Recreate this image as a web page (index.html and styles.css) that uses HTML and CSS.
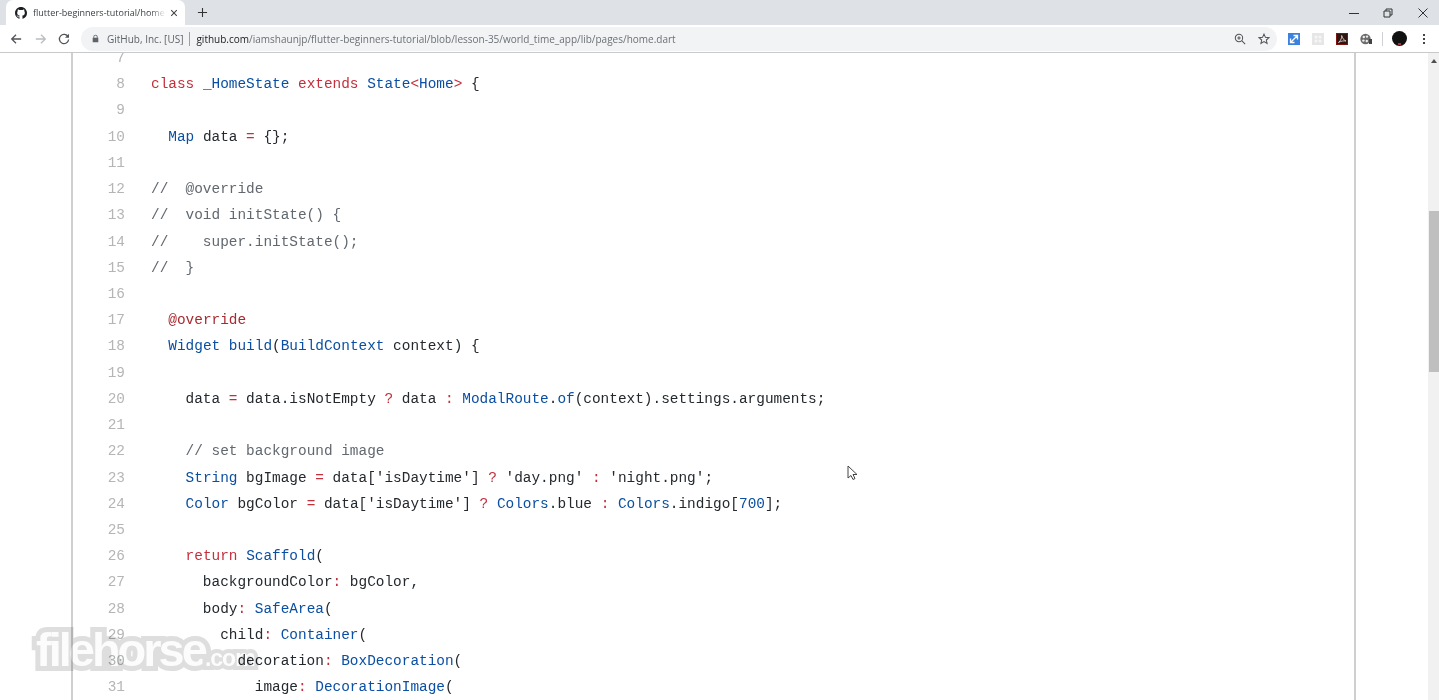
FILE: index.html
```html
<!DOCTYPE html>
<html lang="en">
<head>
    <meta charset="UTF-8">
    <title>flutter-beginners-tutorial/home.dart</title>
    <link rel="stylesheet" href="styles.css">
</head>
<body>
    <!-- Browser chrome -->
    <header class="chrome">
        <div class="tabstrip">
            <div class="tab">
                <svg class="favicon" viewBox="0 0 16 16"><path fill="#1b1f23" d="M8 0C3.58 0 0 3.58 0 8c0 3.54 2.29 6.53 5.47 7.59.4.07.55-.17.55-.38 0-.19-.01-.82-.01-1.49-2.01.37-2.53-.49-2.69-.94-.09-.23-.48-.94-.82-1.13-.28-.15-.68-.52-.01-.53.63-.01 1.08.58 1.23.82.72 1.21 1.87.87 2.33.66.07-.52.28-.87.51-1.07-1.78-.2-3.64-.89-3.64-3.95 0-.87.31-1.59.82-2.15-.08-.2-.36-1.02.08-2.12 0 0 .67-.21 2.2.82.64-.18 1.32-.27 2-.27s1.36.09 2 .27c1.53-1.04 2.2-.82 2.2-.82.44 1.1.16 1.92.08 2.12.51.56.82 1.27.82 2.15 0 3.07-1.87 3.75-3.65 3.95.29.25.54.73.54 1.48 0 1.07-.01 1.93-.01 2.2 0 .21.15.46.55.38A8.01 8.01 0 0 0 16 8c0-4.42-3.58-8-8-8z"/></svg>
                <span class="tab-title">flutter-beginners-tutorial/home.dart</span>
                <svg class="tab-close" viewBox="0 0 10 10"><path d="M1.5 1.5l7 7M8.5 1.5l-7 7"/></svg>
            </div>
            <svg class="new-tab" viewBox="0 0 12 12"><path d="M6 1v10M1 6h10"/></svg>
            <div class="window-controls">
                <svg viewBox="0 0 10 10"><path d="M0 5.5h10"/></svg>
                <svg viewBox="0 0 10 10"><path d="M1 3h6v6H1zM3 3V1h6v6H7"/></svg>
                <svg viewBox="0 0 10 10"><path d="M.5.5l9 9M9.5.5l-9 9"/></svg>
            </div>
        </div>
        <div class="toolbar">
            <svg class="nav-icon" viewBox="0 0 14 14"><path d="M13 7H2M7 2L2 7l5 5"/></svg>
            <svg class="nav-icon disabled" viewBox="0 0 14 14"><path d="M1 7h11M7 2l5 5-5 5"/></svg>
            <svg class="nav-icon" viewBox="0 0 14 14"><path d="M11.8 4.5A5.4 5.4 0 1 0 12.4 7.6"/><path class="solid" d="M12.8 1v4.6H8.2z"/></svg>
            <div class="omnibox">
                <svg class="lock" viewBox="0 0 10 12"><path d="M2 5V3.5a3 3 0 0 1 6 0V5h1v6.500H1V5zM3.200 5h3.600V3.500a1.800 1.800 0 0 0-3.600 0z"/></svg>
                <span class="issuer">GitHub, Inc. [US]</span>
                <span class="divider"></span>
                <span class="url"><b>github.com</b>/iamshaunjp/flutter-beginners-tutorial/blob/lesson-35/world_time_app/lib/pages/home.dart</span>
                <svg class="omni-icon zoom-icon" viewBox="0 0 14 14"><circle cx="5.800" cy="5.800" r="4.300"/><path d="M9 9l4 4M3.800 5.800h4M5.800 3.800v4"/></svg>
                <svg class="omni-icon star-icon" viewBox="0 0 14 14"><path d="M7 1.300l1.700 3.800 4.100.4-3.100 2.700.9 4L7 10.100l-3.600 2.100.9-4-3.100-2.700 4.100-.4z"/></svg>
            </div>
            <div class="extensions">
                <svg class="ext" viewBox="0 0 12 12"><rect width="12" height="12" fill="#3b82e0"/><path d="M3 9l6-6M5.500 2.500H9.500V6.500M2.500 5.500V9.500H6.500" fill="none" stroke="#fff" stroke-width="1.300"/></svg>
                <svg class="ext" viewBox="0 0 12 12"><rect width="12" height="12" fill="#e6e6e6"/><circle cx="4" cy="4" r="1.500" fill="#f6f6f6"/><circle cx="8" cy="4" r="1.500" fill="#f6f6f6"/><circle cx="4" cy="8" r="1.500" fill="#f6f6f6"/><circle cx="8" cy="8" r="1.500" fill="#f6f6f6"/></svg>
                <svg class="ext" viewBox="0 0 12 12"><rect width="12" height="12" fill="#7c1410"/><rect x="1" y="1" width="10" height="10" fill="#2d1512"/><path d="M2.500 9.500C5 7.500 6 4.500 5.700 2.500 6.500 5 8 7.500 10 8 7.500 7.700 5 8 2.500 9.500z" fill="none" stroke="#f0e0dc" stroke-width=".8"/></svg>
                <svg class="ext" viewBox="0 0 12 12"><circle cx="5.500" cy="6" r="5.200" fill="#6c6c6c"/><circle cx="3.800" cy="4" r="1.200" fill="#eee"/><circle cx="7" cy="3.600" r="1.200" fill="#eee"/><circle cx="3.400" cy="7.600" r="1.200" fill="#eee"/><circle cx="6.800" cy="8" r="1.200" fill="#eee"/><rect x="9" y="6" width="3" height="5" fill="#444"/></svg>
            </div>
            <span class="toolbar-sep"></span>
            <div class="avatar"><span class="avatar-dot"></span></div>
            <div class="kebab"><i></i><i></i><i></i></div>
        </div>
    </header>

    <!-- Page -->
    <div class="viewport">
        <main class="page">
            <div class="blob">
                <div class="code">
                    <div class="line"><span class="num">7</span><code></code></div>
                    <div class="line"><span class="num">8</span><code><span class="k">class</span> <span class="b">_HomeState</span> <span class="k">extends</span> <span class="b">State</span><span class="k">&lt;</span><span class="b">Home</span><span class="k">&gt;</span> {</code></div>
                    <div class="line"><span class="num">9</span><code></code></div>
                    <div class="line"><span class="num">10</span><code>  <span class="b">Map</span> data <span class="k">=</span> {};</code></div>
                    <div class="line"><span class="num">11</span><code></code></div>
                    <div class="line"><span class="num">12</span><code class="c">//  @override</code></div>
                    <div class="line"><span class="num">13</span><code class="c">//  void initState() {</code></div>
                    <div class="line"><span class="num">14</span><code class="c">//    super.initState();</code></div>
                    <div class="line"><span class="num">15</span><code class="c">//  }</code></div>
                    <div class="line"><span class="num">16</span><code></code></div>
                    <div class="line"><span class="num">17</span><code>  <span class="a">@override</span></code></div>
                    <div class="line"><span class="num">18</span><code>  <span class="b">Widget</span> <span class="b">build</span>(<span class="b">BuildContext</span> context) {</code></div>
                    <div class="line"><span class="num">19</span><code></code></div>
                    <div class="line"><span class="num">20</span><code>    data <span class="k">=</span> data.isNotEmpty <span class="k">?</span> data <span class="k">:</span> <span class="b">ModalRoute</span>.<span class="b">of</span>(context).settings.arguments;</code></div>
                    <div class="line"><span class="num">21</span><code></code></div>
                    <div class="line"><span class="num">22</span><code>    <span class="c">// set background image</span></code></div>
                    <div class="line"><span class="num">23</span><code>    <span class="b">String</span> bgImage <span class="k">=</span> data[<span class="s">'isDaytime'</span>] <span class="k">?</span> <span class="s">'day.png'</span> <span class="k">:</span> <span class="s">'night.png'</span>;</code></div>
                    <div class="line"><span class="num">24</span><code>    <span class="b">Color</span> bgColor <span class="k">=</span> data[<span class="s">'isDaytime'</span>] <span class="k">?</span> <span class="b">Colors</span>.blue <span class="k">:</span> <span class="b">Colors</span>.indigo[<span class="b">700</span>];</code></div>
                    <div class="line"><span class="num">25</span><code></code></div>
                    <div class="line"><span class="num">26</span><code>    <span class="k">return</span> <span class="b">Scaffold</span>(</code></div>
                    <div class="line"><span class="num">27</span><code>      backgroundColor<span class="k">:</span> bgColor,</code></div>
                    <div class="line"><span class="num">28</span><code>      body<span class="k">:</span> <span class="b">SafeArea</span>(</code></div>
                    <div class="line"><span class="num">29</span><code>        child<span class="k">:</span> <span class="b">Container</span>(</code></div>
                    <div class="line"><span class="num">30</span><code>          decoration<span class="k">:</span> <span class="b">BoxDecoration</span>(</code></div>
                    <div class="line"><span class="num">31</span><code>            image<span class="k">:</span> <span class="b">DecorationImage</span>(</code></div>
                </div>
            </div>
        </main>
        <div class="scrollbar">
            <span class="arrow"></span>
            <span class="thumb"></span>
        </div>

        <!-- Mouse pointer and watermark sit over the page -->
        <svg class="pointer" viewBox="0 0 11 16"><path d="M1 1v12l3-2.500 2 4 2-1-2-4h4z"/></svg>
        <div class="watermark">filehorse<small>.com</small></div>
    </div>
</body>
</html>
```

FILE: styles.css
```css
html, body {
    margin: 0;
    height: 100%;
    overflow: hidden;
}
body {
    display: flex;
    flex-direction: column;
    background: #fff;
    font-family: "Open Sans", Arial, sans-serif;
}

/* chrome */
.chrome {
    flex: none;
    height: 53px;
    box-sizing: border-box;
    border-bottom: 1px solid #c8c9cb;
}
.tabstrip {
    height: 25px;
    display: flex;
    align-items: center;
    background: #dee1e6;
}
.tab {
    width: 179px;
    height: 25px;
    margin-left: 6px;
    padding: 0 7px 0 9px;
    box-sizing: border-box;
    display: flex;
    align-items: center;
    background: #fff;
    border-radius: 7px 7px 0 0;
}
.favicon {
    flex: none;
    width: 12px;
    height: 12px;
}
.tab-title {
    flex: 1;
    margin-left: 6px;
    font-size: 9px;
    color: #3c4043;
    white-space: nowrap;
    overflow: hidden;
    -webkit-mask-image: linear-gradient(to right, #000 88%, transparent 100%);
    mask-image: linear-gradient(to right, #000 88%, transparent 100%);
}
.tab-close {
    flex: none;
    width: 8px;
    height: 8px;
    margin-left: 4px;
    fill: none;
    stroke: #444;
    stroke-width: 1.300;
}
.new-tab {
    width: 11px;
    height: 11px;
    margin-left: 12px;
    fill: none;
    stroke: #333;
    stroke-width: 1.200;
}
.window-controls {
    margin-left: auto;
    display: flex;
    gap: 24px;
    padding-right: 11px;
}
.window-controls svg {
    width: 10px;
    height: 10px;
    fill: none;
    stroke: #333;
    stroke-width: 1;
}
.window-controls svg:last-child {
    margin-left: 1px;
}
.toolbar {
    height: 27px;
    display: flex;
    align-items: center;
    background: #fff;
}
.nav-icon {
    flex: none;
    width: 12px;
    height: 12px;
    margin-left: 11px;
    fill: none;
    stroke: #505357;
    stroke-width: 1.500;
}
.nav-icon:first-child {
    margin-left: 10px;
}
.nav-icon.disabled {
    margin-left: 13px;
    stroke: #b9bcc0;
}
.nav-icon .solid {
    fill: #505357;
    stroke: none;
}
.omnibox {
    flex: none;
    width: 1196px;
    height: 24px;
    margin-left: 11px;
    padding: 0 7px 0 11px;
    box-sizing: border-box;
    display: flex;
    align-items: center;
    background: #f1f3f4;
    border-radius: 12px;
    font-size: 10px;
    white-space: nowrap;
}
.lock {
    width: 7px;
    height: 9px;
    fill: #5f6368;
}
.issuer {
    margin-left: 8px;
    color: #5f6368;
}
.divider {
    width: 1px;
    height: 14px;
    margin: 0 6px 0 6px;
    background: #9aa0a6;
}
.url {
    color: #6c7075;
}
.url b {
    font-weight: 400;
    color: #202124;
}
.omni-icon {
    flex: none;
    width: 12px;
    height: 12px;
    fill: none;
    stroke: #505357;
    stroke-width: 1.200;
}
.zoom-icon {
    margin-left: auto;
}
.star-icon {
    margin-left: 12px;
}
.extensions {
    flex: none;
    display: flex;
    gap: 12px;
    margin-left: 11px;
}
.ext {
    width: 12px;
    height: 12px;
}
.toolbar-sep {
    flex: none;
    width: 1px;
    height: 14px;
    margin-left: 10px;
    background: #cfd1d4;
}
.avatar {
    flex: none;
    position: relative;
    width: 15px;
    height: 15px;
    margin-left: 9px;
    border-radius: 50%;
    background: #111;
}
.avatar-dot {
    position: absolute;
    left: 6px;
    bottom: 1px;
    width: 3px;
    height: 2px;
    background: #a33;
}
.kebab {
    flex: none;
    display: flex;
    flex-direction: column;
    gap: 2px;
    margin-left: 16px;
}
.kebab i {
    width: 2px;
    height: 2px;
    background: #444;
}

/* page */
.viewport {
    position: relative;
    flex: 1;
    min-height: 0;
    display: flex;
}
.page {
    flex: 1;
    overflow: hidden;
    padding-left: 71px;
}
.blob {
    width: 1285px;
    height: 100%;
    box-sizing: border-box;
    overflow: hidden;
    border-left: 2px solid #cfcfcf;
    border-right: 2px solid #cfcfcf;
}
.code {
    margin-top: -8px;
    font-family: "Liberation Mono", monospace;
    font-size: 14.420px;
    color: #24292e;
}
.line {
    display: flex;
    height: 26.220px;
    line-height: 26.220px;
}
.num {
    flex: none;
    width: 52px;
    text-align: right;
    color: #b4b5b7;
}
.line code {
    margin-left: 26px;
    font: inherit;
    white-space: pre;
}
.k { color: #c42f3c; }
.b { color: #0a4fa3; }
.c { color: #62686f; }
.a { color: #a82a30; }
.s { color: #24292e; }

.scrollbar {
    flex: none;
    position: relative;
    width: 11px;
    background: #f1f1f1;
}
.arrow {
    position: absolute;
    top: 6px;
    left: 3px;
    border-left: 3px solid transparent;
    border-right: 3px solid transparent;
    border-bottom: 4px solid #505050;
}
.thumb {
    position: absolute;
    top: 158px;
    left: 1px;
    right: 0;
    height: 161px;
    background: #bfbfbf;
}
.pointer {
    position: absolute;
    left: 847px;
    top: 412px;
    width: 11px;
    height: 16px;
    fill: #fff;
    stroke: #444;
    stroke-width: 1;
}
.watermark {
    position: absolute;
    left: 36px;
    top: 567px;
    font-family: "Liberation Sans", Arial, sans-serif;
    font-weight: 700;
    font-size: 47px;
    line-height: 60px;
    letter-spacing: -3px;
    color: #fcfcfc;
    -webkit-text-stroke: 10px #dedede;
    paint-order: stroke fill;
    mix-blend-mode: multiply;
}
.watermark small {
    font-size: 23px;
    letter-spacing: -1px;
    -webkit-text-stroke-width: 8px;
}
```
